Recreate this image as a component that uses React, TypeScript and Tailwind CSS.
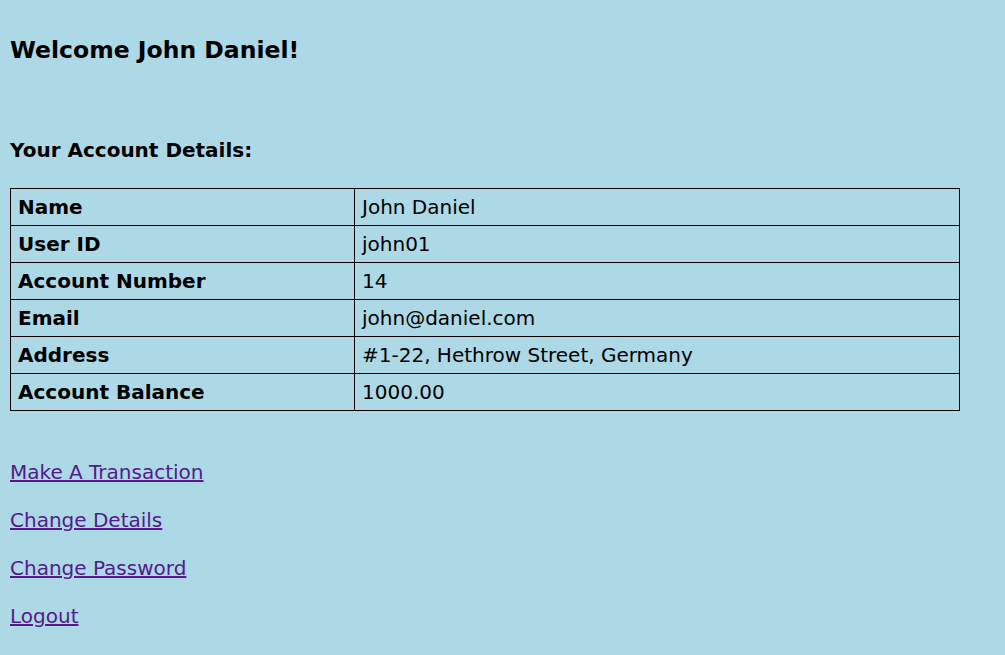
const rows: [string, string][] = [
  ['Name', 'John Daniel'],
  ['User ID', 'john01'],
  ['Account Number', '14'],
  ['Email', 'john@daniel.com'],
  ['Address', '#1-22, Hethrow Street, Germany'],
  ['Account Balance', '1000.00'],
];

const links = ['Make A Transaction', 'Change Details', 'Change Password', 'Logout'];

export default function App() {
  return (
    <div className="min-h-[655px] bg-[#add8e6] px-[10px] pt-[36px] pb-4 font-['DejaVu_Sans',Verdana,sans-serif] text-black">
      <h1 className="text-[23.5px] font-bold leading-[28px]">Welcome John Daniel!</h1>

      <h2 className="mt-[74px] text-[20px] font-bold leading-[24px]">Your Account Details:</h2>

      <table className="mt-[26px] w-[950px] border-collapse text-[20px]">
        <tbody>
          {rows.map(([label, value]) => (
            <tr key={label}>
              <td className="w-[344px] border border-black px-[7px] py-[6px] font-bold leading-[24px]">{label}</td>
              <td className="border border-black px-[7px] py-[6px] leading-[24px]">{value}</td>
            </tr>
          ))}
        </tbody>
      </table>

      <div className="mt-[49px] flex flex-col gap-[24px]">
        {links.map((l) => (
          <a key={l} href="#" className="self-start text-[20px] leading-[24px] text-[#551a8b] underline">
            {l}
          </a>
        ))}
      </div>
    </div>
  );
}
